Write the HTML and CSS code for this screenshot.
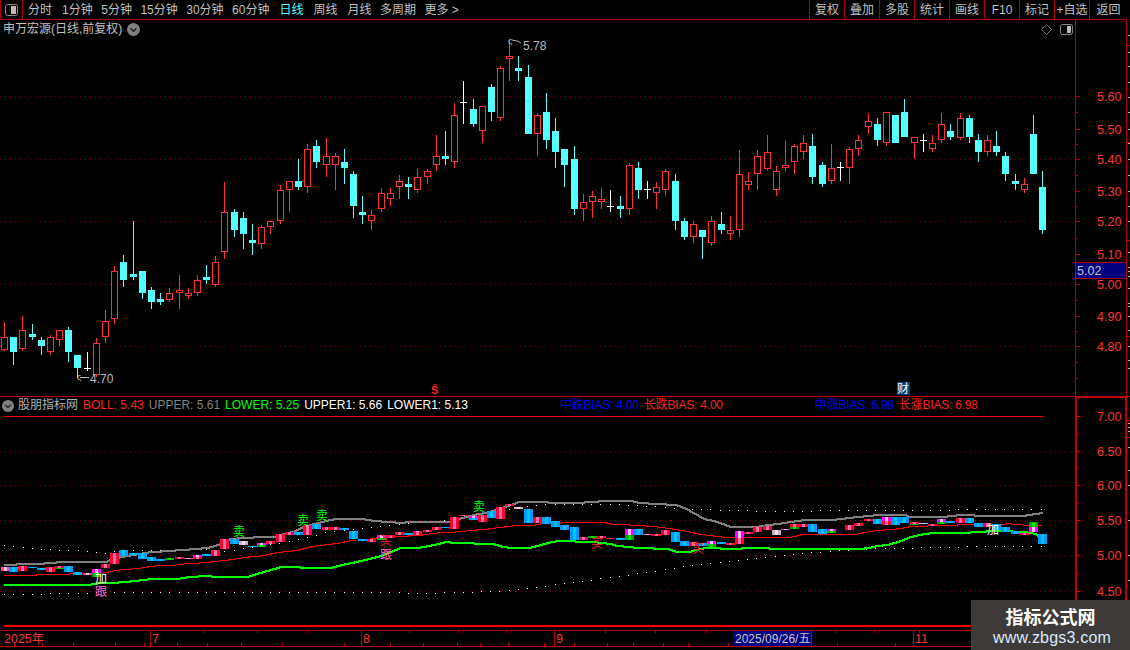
FILE: index.html
```html
<!DOCTYPE html>
<html lang="zh">
<head>
<meta charset="utf-8">
<title>申万宏源</title>
<link rel="stylesheet" href="styles.css">
</head>
<body>
<div class="app">
  <header class="toolbar">
    <div class="toggle-cell">
      <svg class="toggle-icon" width="13" height="12" viewBox="0 0 13 12"><rect x="0.5" y="0.5" width="12" height="11" rx="2" fill="none" stroke="#8a8a8a"/><rect x="6" y="2" width="5" height="8" fill="#b8b8b8"/></svg>
    </div>
    <nav class="tabs">
      <span class="tab">分时</span>
      <span class="tab tab-wide">1分钟</span>
      <span class="tab">5分钟</span>
      <span class="tab">15分钟</span>
      <span class="tab">30分钟</span>
      <span class="tab">60分钟</span>
      <span class="tab tab-wide tab-active">日线</span>
      <span class="tab tab-wide">周线</span>
      <span class="tab tab-wide">月线</span>
      <span class="tab">多周期</span>
      <span class="tab">更多 &gt;</span>
    </nav>
    <div class="actions">
      <span class="action">复权</span>
      <span class="action">叠加</span>
      <span class="action">多股</span>
      <span class="action">统计</span>
      <span class="action">画线</span>
      <span class="action">F10</span>
      <span class="action">标记</span>
      <span class="action">+自选</span>
      <span class="action">返回</span>
    </div>
  </header>

  <section class="panel panel-price">
    <div class="plot">
      <svg id="price-plot" class="plot-svg" viewBox="0 20 1075 376" width="1075" height="376"></svg>
      <div class="title">
        <span>申万宏源(日线,前复权)</span>
        <svg class="chevron" width="13" height="13" viewBox="0 0 13 13"><circle cx="6.5" cy="6.5" r="6.5" fill="#808080"/><path d="M3.5 5.2 6.5 8.2 9.5 5.2" fill="none" stroke="#222" stroke-width="1.6"/></svg>
      </div>
      <div class="corner-tools">
        <svg width="11" height="11" viewBox="0 0 11 11"><path d="M5.5 .5 10.5 5.5 5.5 10.5 .5 5.5Z" fill="none" stroke="#7a7a7a"/></svg>
        <svg width="13" height="11" viewBox="0 0 13 11"><rect x="0.5" y="0.5" width="12" height="10" rx="2" fill="none" stroke="#8a8a8a"/><rect x="7" y="2" width="4" height="7" fill="#b8b8b8"/></svg>
      </div>
    </div>
    <svg id="price-axis" class="axis" viewBox="1075 20 55 377" width="55" height="377"></svg>
  </section>

  <section class="panel panel-sub">
    <div class="plot">
      <svg id="sub-plot" class="plot-svg" viewBox="0 397 1075 233" width="1075" height="233"></svg>
      <div class="legend">
        <svg class="chevron" width="12" height="12" viewBox="0 0 13 13"><circle cx="6.5" cy="6.5" r="6.5" fill="#808080"/><path d="M3.5 5.2 6.5 8.2 9.5 5.2" fill="none" stroke="#222" stroke-width="1.6"/></svg>
        <span class="legend-name">股朋指标网</span>
        <span class="c-red">BOLL: 5.43</span>
        <span class="c-gray">UPPER: 5.61</span>
        <span class="c-green">LOWER: 5.25</span>
        <span class="c-white">UPPER1: 5.66</span>
        <span class="c-white">LOWER1: 5.13</span>
        <span class="c-blue bias bias-first">中跌BIAS: 4.00</span>
        <span class="c-red bias">长跌BIAS: 4.00</span>
        <span class="c-blue bias bias-second">中涨BIAS: 6.98</span>
        <span class="c-red bias">长涨BIAS: 6.98</span>
      </div>
    </div>
    <svg id="sub-axis" class="axis" viewBox="1075 397 55 233" width="55" height="233"></svg>
  </section>

  <footer class="dates">
    <svg id="date-axis" class="date-svg" viewBox="0 630 1130 20" width="1130" height="20"></svg>
    <div class="watermark">
      <div class="wm-title">指标公式网</div>
      <div class="wm-url">www.zbgs3.com</div>
    </div>
  </footer>
</div>
<script src="app.js"></script>
</body>
</html>
```

FILE: styles.css
```css
* { box-sizing: border-box; }
html, body { margin: 0; height: 100%; background: #000; overflow: hidden; }
body { font: 12px "Liberation Sans", "Noto Sans CJK SC", sans-serif; color: #c0c0c0; }
.app { width: 1130px; height: 650px; display: flex; flex-direction: column; position: relative; overflow: hidden; }

.toolbar { height: 20px; width: 1127px; display: flex; align-items: stretch; border-bottom: 1px solid #b00000; line-height: 20px; white-space: nowrap; }
.toggle-cell { width: 23px; display: flex; align-items: center; justify-content: center; border-left: 1px solid #b00000; border-right: 1px solid #b00000; }
.tabs { display: flex; gap: 8.5px; padding-left: 5px; }
.tab-wide { margin-left: 1.5px; }
.tab-active { color: #54ffff; }
.actions { margin-left: auto; display: flex; }
.action { width: 35px; text-align: center; border-left: 1px solid #b00000; }
.action:last-child { width: 38px; }

.panel { display: flex; }
.panel-price { height: 377px; border-bottom: 1px solid #c00000; }
.panel-sub { height: 233px; }
.plot { position: relative; width: 1075px; flex: none; }
.plot-svg { display: block; }
.axis { display: block; flex: none; }

.title { position: absolute; left: 3px; top: 1px; display: flex; align-items: center; gap: 5px; line-height: 17px; }
.chevron { display: block; flex: none; }
.corner-tools { position: absolute; right: 2px; top: 4px; display: flex; gap: 8px; align-items: center; }

.legend { position: absolute; left: 2px; top: 0; height: 17px; display: flex; align-items: center; gap: 5px; line-height: 17px; white-space: nowrap; }
.legend-name { color: #b0b0b0; margin-left: -1px; }
.c-red { color: #ff2020; }
.c-gray { color: #808080; }
.c-green { color: #00ff00; }
.c-white { color: #fff; }
.c-blue { color: #0000ff; }
.bias { letter-spacing: -0.2px; }
.bias-first { margin-left: 87px; }
.bias-second { margin-left: 87px; }

.dates { flex: 1; position: relative; }
.date-svg { display: block; }
.watermark { position: absolute; right: 0; bottom: 0; width: 159px; height: 50px; background: #3e3a39; text-align: center; }
.wm-title { font: bold 18px/22px "Noto Sans CJK SC", sans-serif; color: #fff; margin-top: 5px; }
.wm-url { font: 16px/20px "Liberation Sans", sans-serif; letter-spacing: 0.2px; color: #dbe9ff; margin-top: 1px; padding-left: 3px; }
```

FILE: app.js
```js
var NS = "http://www.w3.org/2000/svg";
var RED = "#ff3232", CYAN = "#54ffff", DOT = "#8f0000";
function el(parent, name, attrs, text) {
  var n = document.createElementNS(NS, name);
  for (var k in attrs) n.setAttribute(k, attrs[k]);
  if (text !== undefined) n.textContent = text;
  parent.appendChild(n);
  return n;
}
function hline(p, x1, x2, y, color, width, dash) {
  var a = { x1: x1, x2: x2, y1: y, y2: y, stroke: color, "stroke-width": width || 1, "shape-rendering": "crispEdges" };
  if (dash) a["stroke-dasharray"] = dash;
  return el(p, "line", a);
}
function vline(p, x, y1, y2, color, width) {
  return el(p, "line", { x1: x, x2: x, y1: y1, y2: y2, stroke: color, "stroke-width": width || 1, "shape-rendering": "crispEdges" });
}

/* candles read from the chart: [centre, type, high, open/top, close/bottom, low] in 3x crop units */
var groups = [
  { xo: 0, yo: 130, c: [
    [13,"r",576,622,660,665],[40,"c",621,621,666,705],[67,"r",558,601,659,665],[97,"c",582,612,621,630],
    [124,"c",621,630,648,675],[151,"r",615,622,668,675],[178,"r",601,601,631,648],[205,"c",591,600,666,696],
    [232,"c",675,675,714,745],[262,"w",666,715,718,723],[289,"r",624,640,735,741],[316,"r",540,574,623,639],
    [343,"r",408,424,567,582],[370,"c",375,396,450,471],[400,"c",273,432,441,450],[427,"c",423,423,489,507],
    [454,"c",471,480,516,537],[481,"c",489,507,516,525],[508,"r",474,490,510,516],[538,"r",435,481,491,537],
    [565,"r",474,490,500,507],[592,"r",435,451,491,498],[619,"c",405,441,450,462],[646,"r",378,397,465,471],
    [673,"r",156,247,368,387],[703,"c",237,246,300,321],[730,"c",246,264,312,357],[757,"c",282,330,339,375],
    [784,"r",285,292,342,357],[811,"r",274,274,293,312]] },
  { xo: 280, yo: 30, c: [
    [1,"r",465,481,574,582],[28,"r",454,454,482,546],[55,"c",387,453,471,480],[82,"r",342,358,473,489],
    [109,"c",330,348,396,414],[139,"r",324,379,407,441],[166,"r",369,379,407,480],[193,"c",357,396,414,462],
    [220,"c",423,432,528,564],[247,"c",498,546,555,582],[274,"r",540,556,575,600],[304,"r",474,490,539,546],
    [331,"r",474,490,509,528],[358,"r",435,454,473,507],[385,"c",441,462,471,507],[412,"r",417,442,482,489],
    [442,"r",417,424,443,462],[469,"r",315,379,407,423],[496,"c",303,378,387,405],[523,"r",219,256,398,414],
    [550,"w",153,216,218,282],[580,"c",207,237,282,291],[607,"r",229,229,305,339],[634,"c",162,171,246,273],
    [661,"r",108,115,266,273],[688,"r",30,79,89,153],[715,"c",78,114,123,153],[745,"c",105,141,312,312],
    [772,"r",249,256,314,378],[799,"c",189,246,330,357],[826,"c",264,303,366,414]] },
  { xo: 560, yo: 90, c: [
    [13,"c",177,177,225,291],[43,"c",168,207,357,375],[70,"r",312,337,359,393],[97,"r",303,319,338,384],
    [124,"r",294,328,338,357],[151,"w",300,348,351,366],[181,"c",318,348,357,384],[208,"r",219,226,359,375],
    [235,"c",216,234,300,327],[262,"w",273,299,302,327],[289,"r",276,292,311,357],[316,"r",237,244,302,318],
    [346,"c",252,273,393,420],[373,"c",384,393,441,450],[400,"r",393,403,443,459],[427,"c",420,420,441,507],
    [454,"r",378,394,461,468],[484,"c",366,402,420,432],[511,"r",378,421,434,450],[538,"r",180,253,422,441],
    [565,"r",246,274,285,300],[592,"r",180,199,254,300],[622,"r",135,187,237,243],[649,"r",228,244,302,318],
    [676,"r",153,226,236,243],[703,"r",162,169,218,252],[730,"r",135,160,188,207],[757,"c",132,168,261,282],
    [787,"c",216,225,282,291],[814,"r",162,235,275,282]] },
  { xo: 840, yo: 90, c: [
    [1,"w",216,233,236,273],[28,"r",172,178,236,282],[55,"r",135,151,179,198],[85,"r",69,94,113,132],
    [112,"c",84,102,150,168],[139,"r",67,67,161,168],[166,"c",75,75,159,159],[193,"c",27,66,141,141],
    [223,"r",141,142,161,207],[250,"w",132,150,153,186],[277,"r",135,160,179,186],[304,"r",69,103,152,159],
    [331,"c",102,123,141,150],[361,"r",69,85,144,150],[388,"c",75,84,141,159],[415,"c",132,150,186,216],
    [442,"r",135,151,188,198],[469,"c",123,168,186,198],[496,"c",186,198,252,273],[526,"c",252,273,282,300],
    [553,"r",264,283,302,309],[580,"c",75,132,252,252],[607,"c",243,291,420,432]] }
];

var price = document.getElementById("price-plot");
[96.5, 159.5, 221.5, 284.5, 346.5].forEach(function (y) { hline(price, 0, 1075, y, DOT, 1, "1 4"); });

groups.forEach(function (g) {
  g.c.forEach(function (d) {
    var cx = g.xo + Math.floor(d[0] / 3);
    var y = function (v) { return g.yo + Math.floor(v / 3); };
    var hi = y(d[2]), top = y(d[3]), bot = y(d[4]), lo = y(d[5]);
    var type = d[1];
    var col = type === "r" ? RED : type === "c" ? CYAN : "#ffffff";
    vline(price, cx + 0.5, hi, lo, col);
    if (type === "r") {
      el(price, "rect", { x: cx - 2.5, y: top + 0.5, width: 6, height: Math.max(bot - top - 1, 1), fill: "#000", stroke: col, "shape-rendering": "crispEdges" });
    } else if (type === "c") {
      el(price, "rect", { x: cx - 3, y: top, width: 7, height: Math.max(bot - top, 1), fill: col, "shape-rendering": "crispEdges" });
    } else {
      hline(price, cx - 3, cx + 4, top + 0.5, col);
    }
  });
});

/* extreme markers */
el(price, "text", { x: 508, y: 44, fill: "#b8b8b8", "font-size": 9 }, "ς");
el(price, "polyline", { points: "512,40 517,41 521,43", fill: "none", stroke: "#b8b8b8" });
el(price, "text", { x: 523, y: 50, fill: "#b8b8b8", "font-size": 12 }, "5.78");
el(price, "text", { x: 77, y: 380, fill: "#b8b8b8", "font-size": 9 }, "ς");
hline(price, 80, 89, 377.5, "#b8b8b8");
el(price, "text", { x: 90, y: 383, fill: "#b8b8b8", "font-size": 12 }, "4.70");

/* event tags above the indicator */
el(price, "text", { x: 431, y: 394, fill: "#ff2020", "font-size": 11, "font-weight": "bold" }, "Ŝ");
el(price, "rect", { x: 897, y: 382, width: 13, height: 13, fill: "#003c78" });
el(price, "text", { x: 897, y: 393, fill: "#fff", "font-size": 12, "font-family": "Noto Sans CJK SC" }, "财");

/* price axis */
var pAxis = document.getElementById("price-axis");
vline(pAxis, 1075.5, 20, 397, "#b00000");
vline(pAxis, 1126.5, 20, 397, "#b00000");
[96.5,129.5,159.5,191.5,221.5,254.5,284.5,316.5,346.5].forEach(function (y) { hline(pAxis, 1075, 1080, y, "#b00000"); });
[[96.5,"5.60"],[129.5,"5.50"],[159.5,"5.40"],[191.5,"5.30"],[221.5,"5.20"],[254.5,"5.10"],[284.5,"5.00"],[316.5,"4.90"],[346.5,"4.80"]].forEach(function (t) {
  el(pAxis, "text", { x: 1097, y: t[0] + 4.5, fill: RED, "font-size": 12.5 }, t[1]);
});
[112.5, 144.5, 175.5, 206.5, 238.5, 300.5, 331.5, 362.5, 378.5].forEach(function (y) { hline(pAxis, 1075, 1078, y, "#b00000"); });
el(pAxis, "rect", { x: 1075.5, y: 262.5, width: 51, height: 16, fill: "#000080", stroke: "#b00000", "shape-rendering": "crispEdges" });
el(pAxis, "text", { x: 1077, y: 275, fill: "#c8c8c8", "font-size": 12.5 }, "5.02");
[35,52,66,82,97,112,129,143,159,175,191,206,221,252,267,271,276,288,303,306,316,330,346,360,368].forEach(function (y) { hline(pAxis, 1128, 1130, y + 0.5, "#b0b0b0"); });
[45,142,240,336].forEach(function (y) { hline(pAxis, 1127, 1130, y + 0.5, "#b00000"); });

/* indicator blocks: [centre, top, bottom, type] in 3x crop units, y from 480 */
var blocks = [
  { xo: 0, b: [[15,262,272,"p"],[40,262,276,"b"],[67,258,274,"r"],[97,261,264,"b"],[124,264,270,"b"],[151,262,276,"r"],[178,258,268,"rg"],[205,258,276,"b"],[232,276,285,"b"],[262,280,285,"p"],[289,267,291,"pg"],[316,252,264,"r"],[343,219,252,"r"],[370,210,228,"b"],[400,219,225,"b"],[427,220,237,"b"],[454,231,243,"b"],[481,237,243,"b"],[508,234,240,"g"],[538,231,237,"r"],[565,234,237,"p"],[592,225,237,"pr"],[619,222,228,"b"],[646,210,228,"r"],[673,177,207,"r"],[703,177,192,"b"],[730,184,195,"l"],[757,198,201,"b"],[784,189,201,"pg"],[811,183,192,"r"],[841,162,186,"r"],[868,156,165,"r"],[895,156,165,"b"],[922,135,165,"r"],[949,132,147,"b"],[979,141,150,"r"],[1006,141,150,"r"],[1033,144,150,"b"],[1060,153,177,"b"],[1087,177,183,"b"],[1114,177,186,"r"],[1144,165,180,"pg"],[1171,165,174,"r"]] },
  { xo: 400, b: [[-2,156,165,"r"],[25,159,165,"b"],[52,153,165,"r"],[82,150,156,"r"],[109,141,150,"r"],[136,141,144,"b"],[163,111,147,"r"],[190,105,108,"r"],[220,108,120,"pb"],[247,105,126,"r"],[274,93,114,"b"],[301,81,117,"r"],[328,72,78,"r"],[355,81,87,"l"],[385,87,129,"b"],[412,111,129,"r"],[439,111,132,"b"],[466,123,141,"b"],[493,135,150,"b"],[523,141,180,"b"],[550,171,180,"r"],[577,168,174,"g"],[604,168,174,"r"],[631,174,177,"r"],[661,174,180,"b"],[688,147,180,"pg"],[715,147,165,"b"],[742,162,165,"p"],[769,162,168,"r"],[796,150,165,"r"],[826,156,186,"b"],[853,183,198,"b"],[880,186,198,"r"],[907,189,198,"b"],[934,183,201,"pg"],[964,186,192,"b"],[991,189,195,"r"],[1018,153,192,"pr"],[1045,156,162,"r"],[1072,141,156,"r"],[1102,138,150,"r"]] },
  { xo: 760, b: [[49,150,165,"l"],[76,147,150,"p"],[103,132,147,"rg"],[130,132,141,"r"],[157,132,156,"b"],[187,147,162,"b"],[214,147,159,"pg"],[268,136,150,"r"],[295,129,138,"r"],[326,117,123,"r"],[353,117,132,"b"],[380,111,135,"pr"],[406,111,135,"b"],[433,111,129,"b"],[463,126,135,"rg"],[490,129,132,"l"],[517,132,138,"r"],[544,117,132,"pg"],[571,123,129,"b"],[601,114,129,"r"],[628,114,129,"b"],[655,129,141,"b"],[682,129,141,"r"],[709,132,150,"b"],[736,141,156,"b"],[766,153,162,"b"],[793,159,165,"r"],[820,126,156,"gp"],[847,162,192,"b"]] }
];
var FILLS = {
  r: ["#ff0033", "#ff70a8"], b: ["#0099ff", "#00c4ff"], g: ["#00a800", "#00e000"],
  p: ["#ff40a0", "#ffc0e0"], l: ["#c8b0c0", "#ffd8f0"], m: ["#ff00ff", "#ffc0ff"]
};
function block(svg, cx, t, b, kind) {
  var f = FILLS[kind];
  var c = cx - 4;
  el(svg, "rect", { x: c, y: t, width: 9, height: b - t, fill: f[0], "shape-rendering": "crispEdges" });
  el(svg, "rect", { x: c + 3, y: t, width: 3, height: b - t, fill: f[1], "shape-rendering": "crispEdges" });
}

var sub = document.getElementById("sub-plot");
hline(sub, 4, 1043, 416.5, "#ff0000", 1);
[451.5, 485.5, 520.5, 555.5, 591.5].forEach(function (y) { hline(sub, 0, 1075, y, DOT, 1, "1 4"); });

function pts(list, xo) { return list.map(function (p) { return [xo + p[0] / 3, 480 + p[1] / 3]; }); }
function interp(list, x) {
  for (var i = 1; i < list.length; i++) {
    if (x <= list[i][0]) {
      var a = list[i - 1], b = list[i], t = (x - a[0]) / ((b[0] - a[0]) || 1);
      return a[1] + (b[1] - a[1]) * t;
    }
  }
  return list[list.length - 1][1];
}
/* stepped line, one pixel column at a time, as the terminal draws it */
function path(svg, list, color, w) {
  var d = "", first = Math.ceil(list[0][0]), last = Math.floor(list[list.length - 1][0]);
  var half = w / 2, prev = Math.round(interp(list, first));
  for (var x = first; x <= last; x++) {
    var y = Math.round(interp(list, x));
    var top = Math.min(y, prev), bottom = Math.max(y, prev);
    var y0 = top - Math.floor(half), h = bottom - top + w;
    d += "M" + x + " " + y0 + "h1v" + h + "h-1z";
    prev = y;
  }
  el(svg, "path", { d: d, fill: color, "shape-rendering": "crispEdges" });
}
var upper = pts([[12,256],[66,252],[150,250],[177,246],[318,245],[330,238],[357,232],[426,220],[453,216],[507,213],[537,210],[591,207],[630,202],[660,192],[672,180],[714,175],[783,171],[827,170],[855,160],[880,155],[910,140],[930,135],[980,122],[1005,117],[1086,117],[1115,122],[1170,127]],0)
  .concat(pts([[0,128],[50,126],[150,126],[180,115],[230,103],[260,98],[290,88],[330,75],[355,66],[440,66],[445,69],[550,69],[553,66],[630,63],[690,63],[715,69],[770,72],[826,75],[850,84],[880,100],[910,117],[940,123],[990,141],[1070,141]],400))
  .concat(pts([[0,138],[50,132],[90,126],[130,120],[215,120],[265,114],[320,108],[355,105],[435,105],[445,111],[545,111],[600,105],[680,108],[795,108],[800,105],[830,102],[848,97]],760));
var mid = pts([[12,286],[54,285],[84,286],[111,283],[190,283],[220,278],[300,279],[325,274],[357,268],[414,264],[441,259],[468,256],[520,254],[552,250],[605,247],[660,241],[687,238],[712,234],[745,229],[770,228],[795,224],[820,218],[855,213],[882,211],[905,205],[935,198],[957,195],[1014,188],[1047,181],[1075,181],[1130,172]],0)
  .concat(pts([[0,168],[70,163],[97,159],[124,156],[178,154],[205,150],[260,146],[288,142],[340,136],[400,134],[428,129],[500,127],[615,127],[620,130],[675,133],[730,136],[785,141],[850,151],[900,162],[950,168],[980,172]],400))
  .concat(pts([[0,172],[90,170],[120,163],[280,163],[310,156],[340,151],[390,147],[420,144],[450,138],[550,135],[630,132],[720,132],[750,129],[755,132],[845,136]],760));
var lower = pts([[12,315],[260,315],[300,309],[370,307],[400,303],[430,300],[455,296],[535,296],[565,291],[620,288],[645,291],[740,291],[765,283],[800,273],[840,261],[895,261],[900,264],[990,264],[1020,256],[1080,243],[1140,228]],0)
  .concat(pts([[0,204],[50,204],[100,195],[135,186],[165,189],[275,192],[300,199],[330,204],[385,204],[410,198],[440,189],[470,183],[520,183],[525,186],[575,186],[630,192],[650,198],[715,204],[800,207],[830,216],[865,216],[885,210],[915,204],[1000,207],[1045,204]],400))
  .concat(pts([[0,204],[50,207],[295,207],[325,204],[350,198],[380,195],[420,183],[450,171],[490,162],[520,159],[625,159],[630,156],[720,153],[790,156],[825,162],[840,180]],760));

/* dotted UPPER1 / LOWER1 */
var upper1 = pts([[12,195],[124,207],[232,211],[316,218],[343,212],[450,210],[600,207],[680,213],[760,199],[868,184],[979,156],[1060,147],[1198,133]],0)
  .concat(pts([[25,129],[136,120],[260,100],[330,85],[412,73],[660,72],[880,87],[1102,93]],400))
  .concat(pts([[49,93],[300,90],[848,87]],760));
var lower1 = pts([[12,343],[400,335],[660,335],[1198,335]],0)
  .concat(pts([[25,339],[160,337],[300,332],[385,325],[466,313],[577,298],[688,283],[796,267],[907,250],[1045,238],[1102,229]],400))
  .concat(pts([[76,224],[187,214],[295,207],[408,203],[520,202],[631,199],[848,199]],760));
for (var i = 0; i < 114; i++) {
  var dx = Math.round(4.3 + 9.17 * i);
  el(sub, "rect", { x: dx, y: Math.round(interp(upper1, dx)), width: 1, height: 1, fill: "#fff", "shape-rendering": "crispEdges" });
  el(sub, "rect", { x: dx, y: Math.round(interp(lower1, dx)), width: 1, height: 1, fill: "#fff", "shape-rendering": "crispEdges" });
}

path(sub, mid, "#ff0000", 1);
path(sub, upper, "#808080", 2);
path(sub, lower, "#00ff00", 2);

blocks.forEach(function (g) {
  g.b.forEach(function (d) {
    var cx = g.xo + Math.floor(d[0] / 3);
    var t = 480 + Math.round(d[1] / 3), b = 480 + Math.round(d[2] / 3);
    var k = d[3];
    if (k.length === 1) { block(sub, cx, t, b, k); return; }
    var m = Math.round((t + b) / 2);
    block(sub, cx, t, m, k[0] === "p" ? "m" : k[0]);
    block(sub, cx, m, b, k[1] === "p" ? "m" : k[1]);
  });
});

[[239,536,"卖","#00ff00"],[303,525,"卖","#00ff00"],[322,520,"卖","#00ff00"],[479,511,"卖","#00ff00"],
 [101,583,"加","#ffffff"],[101,596,"跟","#ff66cc"],[386,545,"买","#ff2020"],[386,559,"跟","#ff66cc"],
 [597,548,"买","#ff2020"],[698,553,"买","#ff2020"],[993,534,"加","#ffffff"]].forEach(function (m) {
  el(sub, "text", { x: m[0], y: m[1], fill: m[3], "font-size": 12, "text-anchor": "middle", "font-family": "Noto Sans CJK SC" }, m[2]);
});
hline(sub, 4, 1075, 626, "#ff0000", 2);

/* indicator axis */
var sAxis = document.getElementById("sub-axis");
vline(sAxis, 1076, 397, 630, "#c00000", 2);
vline(sAxis, 1126, 397, 630, "#c00000", 1.5);
hline(sAxis, 1075, 1127, 397.5, "#c00000", 1.5);
[[416.5,"7.00"],[451.5,"6.50"],[485.5,"6.00"],[520.5,"5.50"],[555.5,"5.00"],[591.5,"4.50"]].forEach(function (t) {
  hline(sAxis, 1075, 1081, t[0], "#c00000");
  el(sAxis, "text", { x: 1097, y: t[0] + 4.5, fill: RED, "font-size": 12.5 }, t[1]);
});
[434, 468, 503, 538, 573, 608].forEach(function (y) { hline(sAxis, 1075, 1079, y + 0.5, "#c00000"); });
[423,427,431,447,470,485,520,555,580,600].forEach(function (y) { hline(sAxis, 1128, 1130, y + 0.5, "#b0b0b0"); });
[420,437].forEach(function (y) { hline(sAxis, 1127, 1130, y + 0.5, "#c00000"); });

/* dates */
var dates = document.getElementById("date-axis");
hline(dates, 0, 1075, 630.5, "#b00000");
hline(dates, 0, 1075, 646.5, "#c00000");
[203,257,308,409,458,506,605,655,706,835,874,919].forEach(function (x) { vline(dates, x + 0.5, 630, 633, "#b00000"); });
[14,42,73,115,144,177,207,241,282,344,390,423,457,480,508,544,574,607,633,663,688,728,757,808,837,895,990].forEach(function (x) { vline(dates, x + 0.5, 643, 647, "#c00000"); });
[[150,"7"],[361,"8"],[554,"9"],[913,"11"]].forEach(function (t) {
  vline(dates, t[0] + 0.5, 630, 646, "#b00000");
  el(dates, "text", { x: t[0] + 2, y: 643, fill: RED, "font-size": 12.5 }, t[1]);
});
el(dates, "text", { x: 4, y: 643, fill: RED, "font-size": 12.5, "font-family": "Liberation Sans, Noto Sans CJK SC" }, "2025年");
el(dates, "rect", { x: 733, y: 631, width: 78, height: 15, fill: "#000080", stroke: "none" });
el(dates, "text", { x: 735, y: 643, fill: "#c8c8c8", "font-size": 12, "font-family": "Liberation Sans, Noto Sans CJK SC" }, "2025/09/26/五");
vline(dates, 811.5, 630, 646, "#b00000");
```
